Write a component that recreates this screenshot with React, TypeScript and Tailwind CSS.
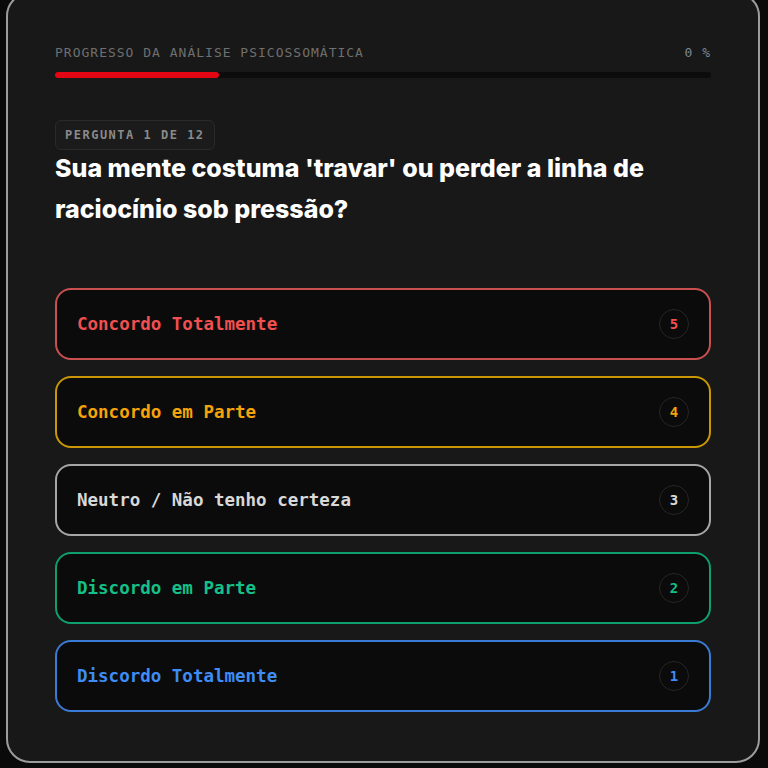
import React from 'react';

const mono = { fontFamily: '"DejaVu Sans Mono", "Liberation Mono", monospace' };
const sans = { fontFamily: 'Inter, "Noto Sans", sans-serif' };

const options = [
  { label: 'Concordo Totalmente', value: 5, box: 'border-[#c8504f]', text: 'text-[#f0504f]' },
  { label: 'Concordo em Parte', value: 4, box: 'border-[#c99606]', text: 'text-[#f5a30b]' },
  { label: 'Neutro / Não tenho certeza', value: 3, box: 'border-[#a6a6a6]', text: 'text-[#d8d8d8]' },
  { label: 'Discordo em Parte', value: 2, box: 'border-[#0f9f6e]', text: 'text-[#14c088]' },
  { label: 'Discordo Totalmente', value: 1, box: 'border-[#3a7bd5]', text: 'text-[#3f8cf5]' },
];

const App = () => {
  const progress = 25;

  return (
    <div className="h-screen overflow-hidden bg-[#0a0a0a]">
      <div className="ml-[6px] mr-[8px] -mt-[8px] rounded-3xl border-2 border-[#9c9c9c] bg-[#181818] px-[47px] pt-[49px] pb-[49px]">
        {/* Progress header */}
        <div className="flex items-center justify-between text-[13px] leading-5 tracking-[1px] text-[#6f6f6f]" style={mono}>
          <span>PROGRESSO DA ANÁLISE PSICOSSOMÁTICA</span>
          <span className="text-[#7c8794]">0 %</span>
        </div>
        <div className="mt-[9px] h-[6px] w-full rounded-full bg-[#0c0c0c]">
          <div className="h-full rounded-full bg-[#e30613]" style={{ width: `${progress}%` }} />
        </div>

        {/* Question */}
        <div className="mt-[42px]">
          <span
            className="inline-block rounded-md border border-[#2a2a2a] bg-[#1b1b1b] px-[9px] py-[6px] text-[12px] font-bold leading-4 tracking-[1.5px] text-[#8a8a8a]"
            style={mono}
          >
            PERGUNTA 1 DE 12
          </span>
          <h1 className="-mt-[2px] text-[25px] font-extrabold leading-[41px] text-white" style={sans}>
            Sua mente costuma 'travar' ou perder a linha de raciocínio sob pressão?
          </h1>
        </div>

        {/* Answer options */}
        <div className="mt-[58px] flex flex-col gap-4">
          {options.map((opt) => (
            <button
              key={opt.value}
              className={`flex h-[72px] items-center justify-between rounded-2xl border-2 bg-[#0b0b0b] pl-5 pr-5 text-left ${opt.box}`}
            >
              <span className={`text-[17.5px] font-bold ${opt.text}`} style={mono}>
                {opt.label}
              </span>
              <span
                className={`flex h-[30px] w-[30px] items-center justify-center rounded-full border border-[#262626] text-[14px] font-bold ${opt.text}`}
                style={mono}
              >
                {opt.value}
              </span>
            </button>
          ))}
        </div>
      </div>
    </div>
  );
};

export default App;
